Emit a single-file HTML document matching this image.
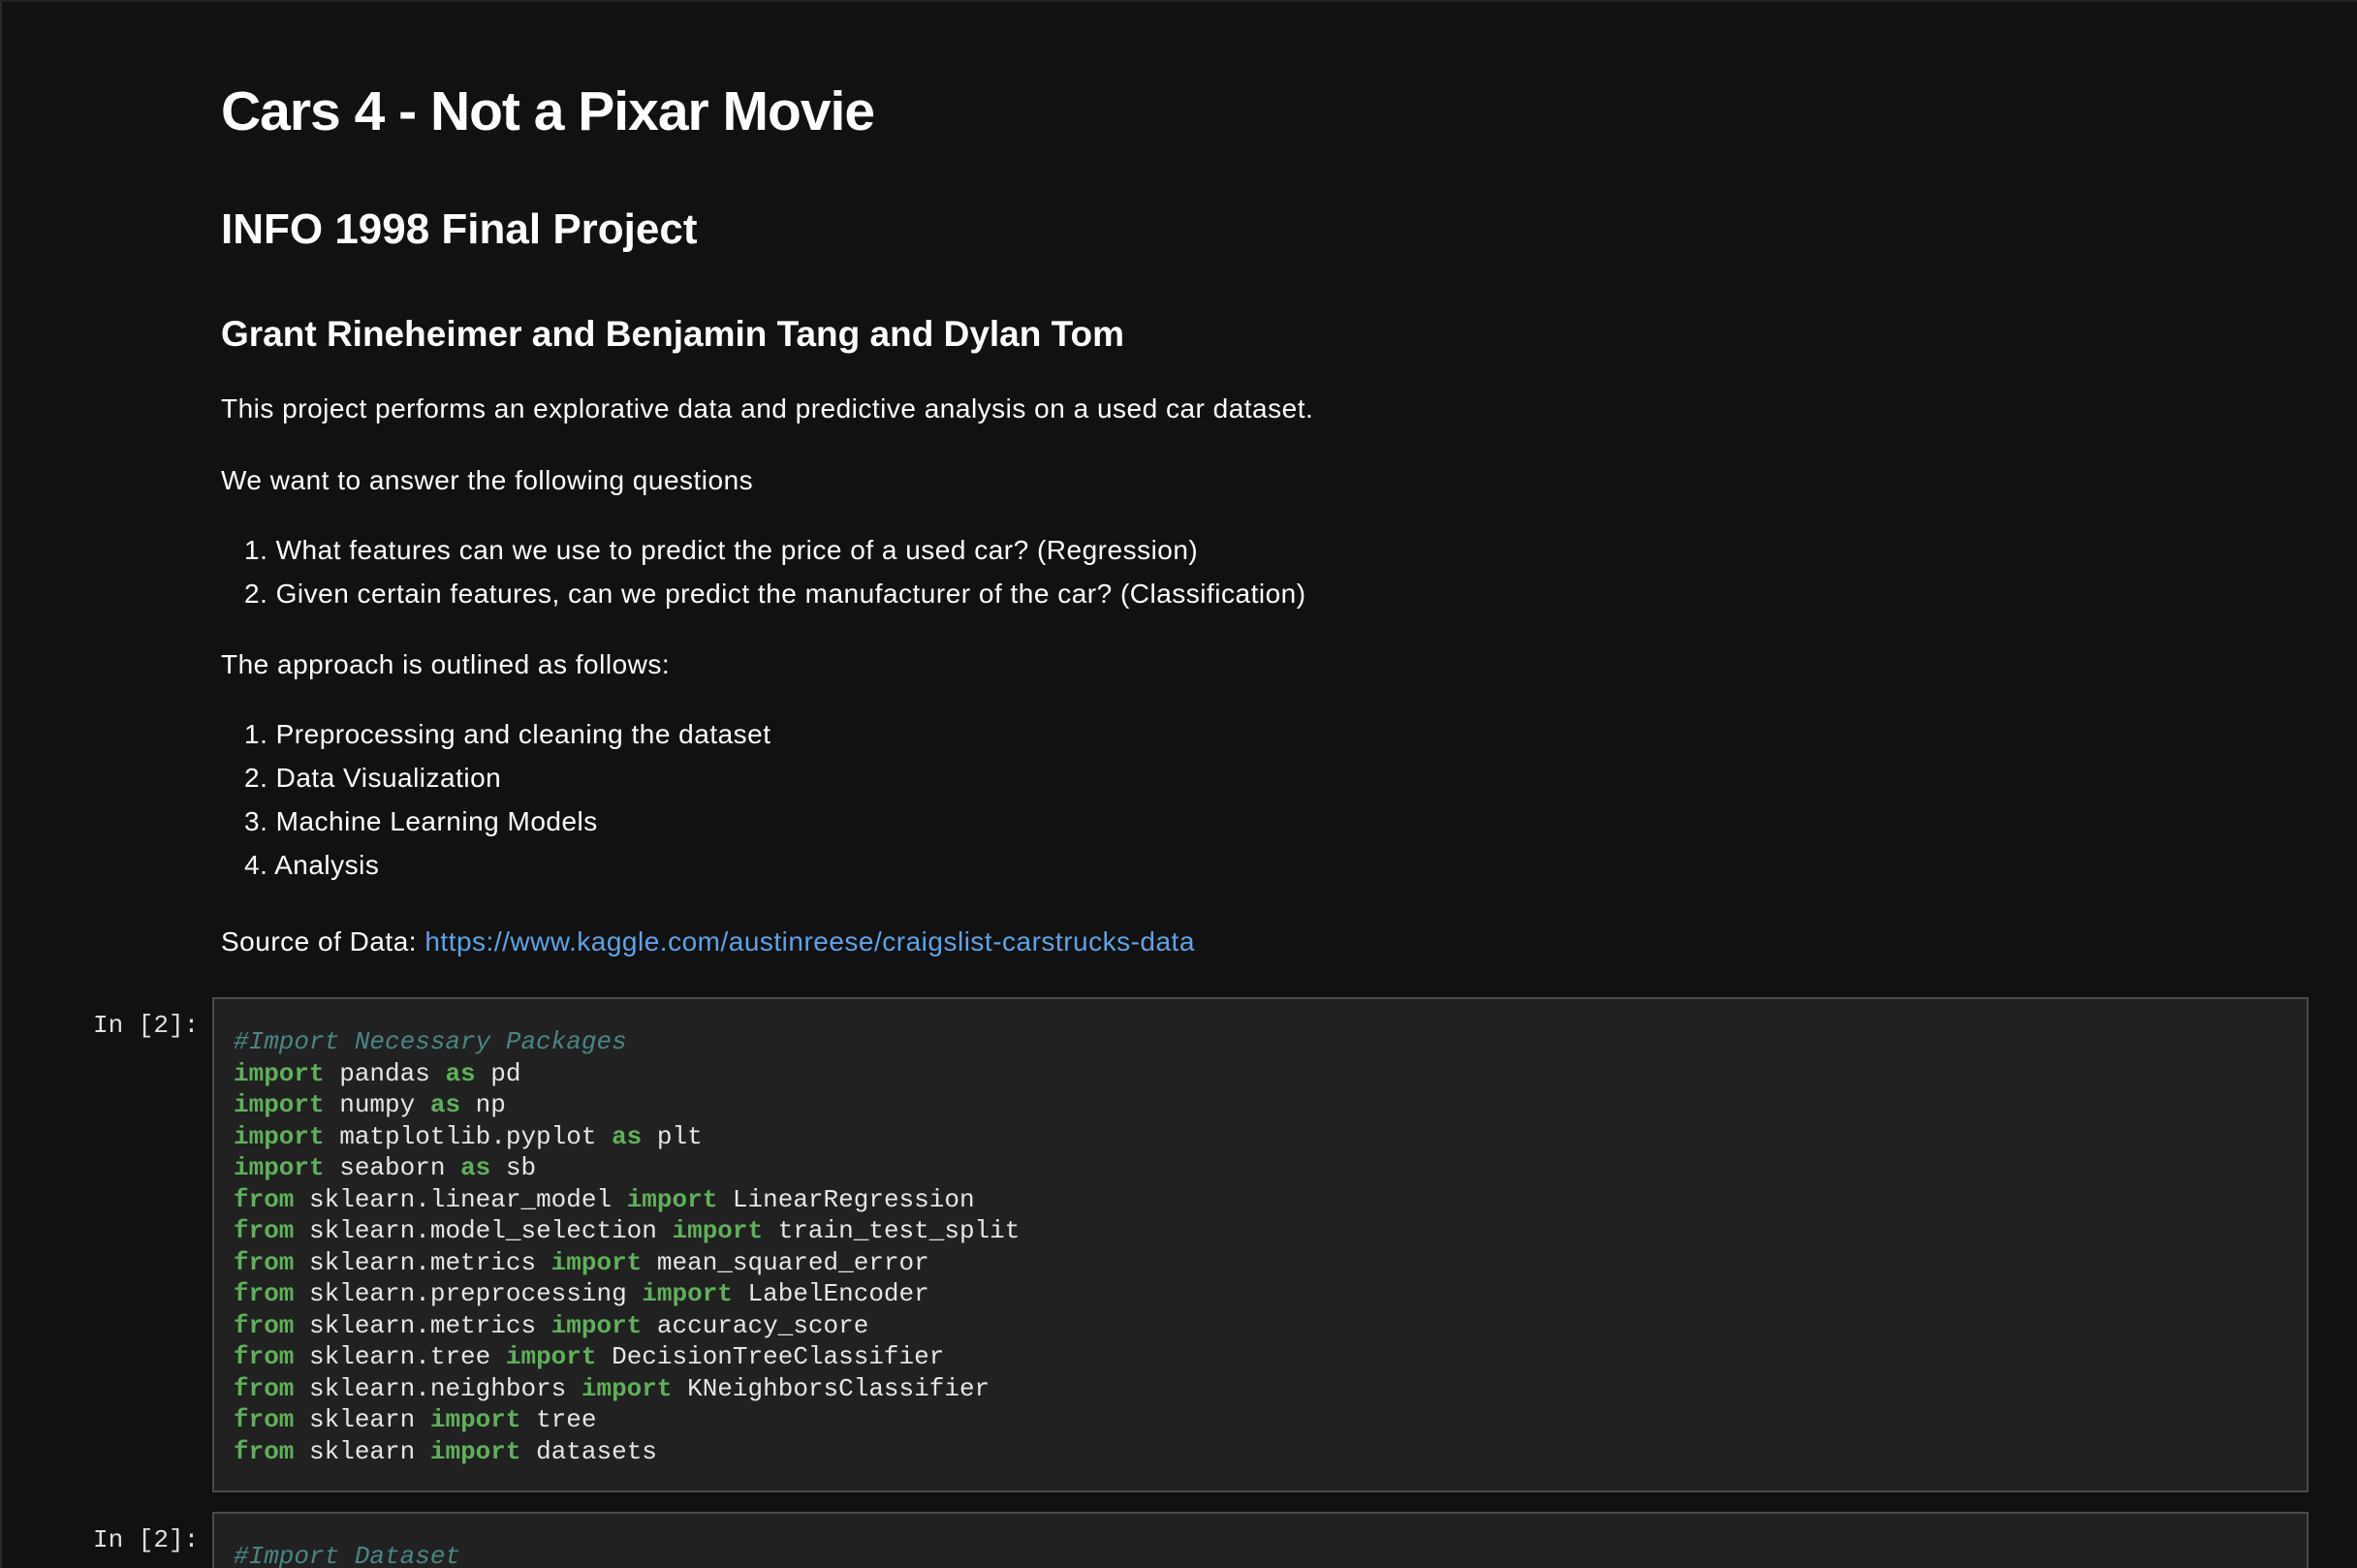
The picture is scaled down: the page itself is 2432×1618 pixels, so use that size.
<!DOCTYPE html>
<html><head><meta charset="utf-8"><style>
html,body{margin:0;padding:0;background:#111111;width:2432px;height:1618px;overflow:hidden;}
body{position:relative;font-family:"Liberation Sans",sans-serif;color:#fff;}
.edge{position:absolute;left:0;top:0;width:2px;height:1618px;background:#2a2a2a;}
.topl{position:absolute;left:0;top:0;width:2432px;height:2px;background:#222;}
.t{position:absolute;white-space:nowrap;transform-origin:0 50%;}
.p{font-size:28px;line-height:32px;letter-spacing:0.5px;}
a{color:#5ea3e8;text-decoration:none;}
.box{position:absolute;left:219px;width:2163px;background:#212121;border:2px solid #4a4a4a;box-sizing:border-box;}
.code{position:absolute;left:241px;font-family:"Liberation Mono",monospace;font-size:26px;line-height:32.5px;color:#e6e6e6;white-space:pre;}
.k{color:#5fb05a;font-weight:bold;}
.c{color:#4b8585;font-style:italic;}
.in{position:absolute;left:96px;font-family:"Liberation Mono",monospace;font-size:26px;color:#e0e0e0;}
</style></head><body>
<div class="edge"></div><div class="topl"></div>
<div class="t" style="left:228px;top:82px;font-size:57px;font-weight:bold;letter-spacing:-1px;">Cars 4 - Not a Pixar Movie</div>
<div class="t" style="left:228px;top:212px;font-size:44px;font-weight:bold;letter-spacing:0px;">INFO 1998 Final Project</div>
<div class="t" style="left:228px;top:324px;font-size:37px;font-weight:bold;letter-spacing:0px;">Grant Rineheimer and Benjamin Tang and Dylan Tom</div>
<div class="t p" style="left:228px;top:406px;">This project performs an explorative data and predictive analysis on a used car dataset.</div>
<div class="t p" style="left:228px;top:480px;">We want to answer the following questions</div>
<div class="t p" style="left:252px;top:552px;">1. What features can we use to predict the price of a used car? (Regression)</div>
<div class="t p" style="left:252px;top:597px;">2. Given certain features, can we predict the manufacturer of the car? (Classification)</div>
<div class="t p" style="left:228px;top:670px;">The approach is outlined as follows:</div>
<div class="t p" style="left:252px;top:742px;">1. Preprocessing and cleaning the dataset</div>
<div class="t p" style="left:252px;top:787px;">2. Data Visualization</div>
<div class="t p" style="left:252px;top:832px;">3. Machine Learning Models</div>
<div class="t p" style="left:252px;top:877px;">4. Analysis</div>
<div class="t p" style="left:228px;top:956px;">Source of Data: <a>https://www.kaggle.com/austinreese/craigslist-carstrucks-data</a></div>

<div class="in" style="top:1043px;">In [2]:</div>
<div class="box" style="top:1029px;height:511px;"></div>
<div class="code" style="top:1059px;"><span class="c">#Import Necessary Packages</span>
<span class="k">import</span> pandas <span class="k">as</span> pd
<span class="k">import</span> numpy <span class="k">as</span> np
<span class="k">import</span> matplotlib.pyplot <span class="k">as</span> plt
<span class="k">import</span> seaborn <span class="k">as</span> sb
<span class="k">from</span> sklearn.linear_model <span class="k">import</span> LinearRegression
<span class="k">from</span> sklearn.model_selection <span class="k">import</span> train_test_split
<span class="k">from</span> sklearn.metrics <span class="k">import</span> mean_squared_error
<span class="k">from</span> sklearn.preprocessing <span class="k">import</span> LabelEncoder
<span class="k">from</span> sklearn.metrics <span class="k">import</span> accuracy_score
<span class="k">from</span> sklearn.tree <span class="k">import</span> DecisionTreeClassifier
<span class="k">from</span> sklearn.neighbors <span class="k">import</span> KNeighborsClassifier
<span class="k">from</span> sklearn <span class="k">import</span> tree
<span class="k">from</span> sklearn <span class="k">import</span> datasets</div>

<div class="in" style="top:1574px;">In [2]:</div>
<div class="box" style="top:1560px;height:100px;"></div>
<div class="code" style="top:1590px;"><span class="c">#Import Dataset</span></div>
</body></html>
